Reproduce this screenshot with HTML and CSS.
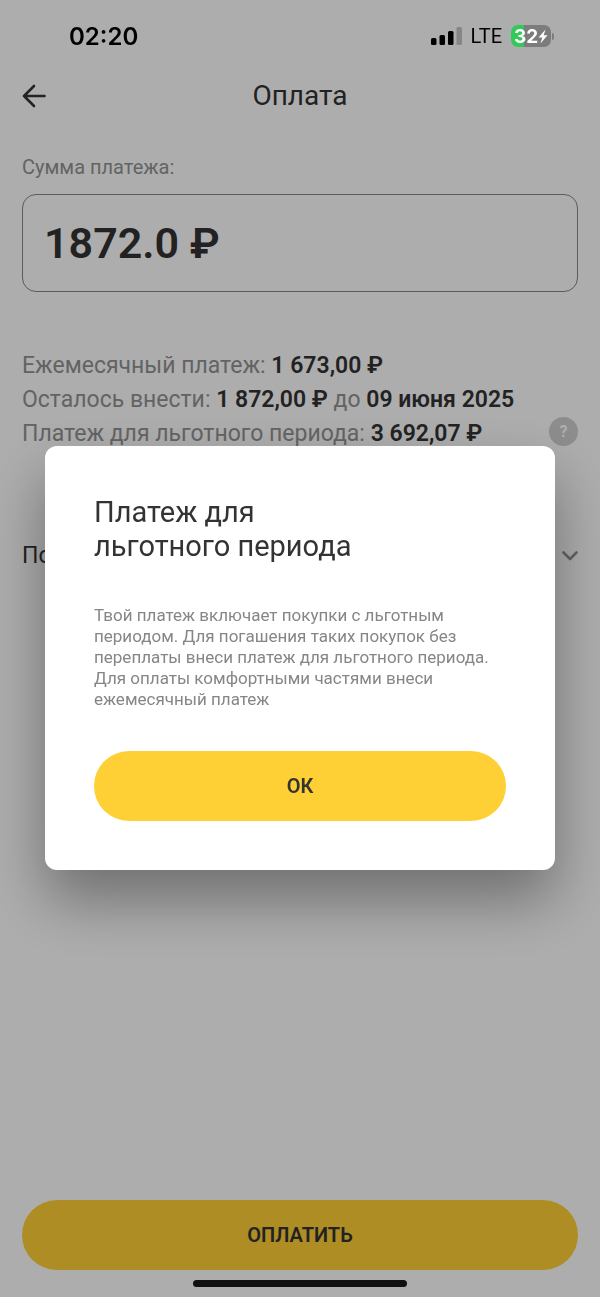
FILE: index.html
```html
<!DOCTYPE html>
<html lang="ru">
<head>
<meta charset="utf-8">
<meta name="viewport" content="width=device-width, initial-scale=1">
<title>Оплата</title>
<link rel="stylesheet" href="styles.css">
</head>
<body>
<div class="screen">
  <div class="status">
    <time class="status-time">02:20</time>
    <div class="status-icons">
      <svg class="signal" viewBox="0 0 31 20" width="31" height="20" aria-hidden="true">
        <rect x="0" y="12" width="5.500" height="7" rx="1.500"/>
        <rect x="8.500" y="9" width="5.500" height="10" rx="1.500"/>
        <rect x="17" y="5" width="5.500" height="14" rx="1.500"/>
        <rect class="signal-off" x="25.500" y="1" width="5.500" height="18" rx="1.500"/>
      </svg>
      <span class="network">LTE</span>
      <div class="battery">
        <div class="battery-body">
          <span>32</span>
          <svg viewBox="0 0 10 15" width="10" height="15" aria-hidden="true"><path d="M7.500 0.500L0.500 8.500H4.300L2.500 14.500L9.500 6.300H5.700Z"/></svg>
        </div>
        <div class="battery-tip"></div>
      </div>
    </div>
  </div>

  <header class="header">
    <button class="back" type="button" aria-label="Назад">
      <svg viewBox="0 0 24 24" width="24" height="24" aria-hidden="true"><path d="M22.500 12H2M12 2L2 12L12 22"/></svg>
    </button>
    <h1 class="title">Оплата</h1>
  </header>

  <main class="content">
    <label class="label" for="amount">Сумма платежа:</label>
    <input class="amount" id="amount" type="text" value="1872.0 ₽">
    <div class="summary">
      <p class="line">Ежемесячный платеж: <b>1 673,00 ₽</b></p>
      <p class="line">Осталось внести: <b>1 872,00 ₽</b> до <b>09 июня 2025</b></p>
      <div class="line-row">
        <p class="line">Платеж для льготного периода: <b>3 692,07 ₽</b></p>
        <button class="help" type="button" aria-label="Подсказка">?</button>
      </div>
    </div>
    <button class="expander" type="button">
      <span>По</span>
      <svg viewBox="0 0 16 10" width="16" height="10" aria-hidden="true"><path d="M1.500 1.500L8 8L14.500 1.500"/></svg>
    </button>
  </main>

  <footer class="footer">
    <button class="button" type="button">ОПЛАТИТЬ</button>
    <div class="home"></div>
  </footer>
</div>

<div class="overlay">
  <section class="dialog" role="dialog" aria-modal="true" aria-labelledby="dialog-title">
    <h2 class="dialog-title" id="dialog-title">Платеж для<br>льготного периода</h2>
    <p class="dialog-text">Твой платеж включает покупки с льготным<br>периодом. Для погашения таких покупок без<br>переплаты внеси платеж для льготного периода.<br>Для оплаты комфортными частями внеси<br>ежемесячный платеж</p>
    <button class="button" type="button">ОК</button>
  </section>
</div>
</body>
</html>
```

FILE: styles.css
```css
* {
  box-sizing: border-box;
}

body {
  margin: 0;
  background: #fff;
  color: #333;
  font-family: Roboto, "Noto Sans", sans-serif;
}

h1, h2, p {
  margin: 0;
  font-weight: 400;
}

button, input {
  font-family: inherit;
  color: inherit;
}

button {
  border: 0;
  padding: 0;
  background: none;
}

svg {
  flex: none;
}

.screen {
  display: flex;
  flex-direction: column;
  min-height: 100vh;
}

/* Status bar stays above the dimmed page */
.status {
  position: relative;
  z-index: 2;
  display: flex;
  align-items: center;
  justify-content: space-between;
  height: 72px;
  padding: 0 46px 0 69px;
  color: #000;
}

.status-time {
  font-family: Inter, sans-serif;
  font-size: 24px;
  font-weight: 600;
}

.status-icons {
  display: flex;
  align-items: center;
  gap: 9px;
}

.signal-off {
  fill: #868686;
}

.network {
  font-size: 20px;
}

.battery {
  display: flex;
  align-items: center;
  gap: 1px;
}

.battery-body {
  display: flex;
  align-items: center;
  justify-content: center;
  width: 40px;
  height: 22px;
  border-radius: 7px;
  background: linear-gradient(to right, #34c759 32%, #7c7c7c 32%);
  color: #fff;
  font-family: Inter, sans-serif;
  font-size: 19px;
  font-weight: 700;
}

.battery-body svg {
  fill: #fff;
}

.battery-tip {
  width: 2px;
  height: 7px;
  border-radius: 0 2px 2px 0;
  background: #7c7c7c;
}

.header {
  display: grid;
  grid-template-columns: 24px 1fr 24px;
  align-items: center;
  height: 47px;
  padding: 0 22px;
}

.back {
  display: flex;
}

.back svg, .expander svg {
  fill: none;
  stroke: #333;
  stroke-width: 2.6;
  stroke-linecap: round;
  stroke-linejoin: round;
}

.title {
  font-size: 28px;
  line-height: 34px;
  text-align: center;
}

.content {
  display: flex;
  flex: 1;
  flex-direction: column;
  padding: 36px 22px 0;
}

.label {
  color: #939393;
  font-size: 20px;
  line-height: 24px;
}

.amount {
  width: 100%;
  height: 98px;
  margin-top: 15px;
  padding: 0 21px;
  border: 1px solid #868686;
  border-radius: 14px;
  background: none;
  font-size: 43px;
  font-weight: 600;
}

.summary {
  margin-top: 57px;
  color: #939393;
}

.line {
  font-size: 23px;
  line-height: 34px;
  white-space: nowrap;
}

.line b {
  color: #333;
  font-weight: 600;
}

.line-row {
  display: flex;
  align-items: flex-start;
  justify-content: space-between;
}

.help {
  width: 29px;
  height: 29px;
  border-radius: 50%;
  background: #d0d0d0;
  color: #fff;
  font-size: 16px;
  font-weight: 700;
}

.expander {
  display: flex;
  align-items: center;
  justify-content: space-between;
  margin-top: 88px;
  font-size: 23px;
  line-height: 34px;
}

.expander svg {
  stroke: #939393;
}

.footer {
  display: flex;
  flex-direction: column;
  align-items: center;
  gap: 10px;
  padding: 0 22px 10px;
}

.button {
  width: 100%;
  height: 70px;
  border-radius: 35px;
  background: #ffd035;
  font-size: 20px;
  font-weight: 600;
}

.home {
  width: 214px;
  height: 7px;
  border-radius: 4px;
  background: #1a1a1a;
}

.overlay {
  position: fixed;
  inset: 0;
  z-index: 1;
  display: flex;
  align-items: center;
  justify-content: center;
  padding: 19px 45px 0;
  background: rgba(0, 0, 0, 0.32);
}

.dialog {
  width: 100%;
  padding: 49px;
  border-radius: 12px;
  background: #fff;
  box-shadow: 0 30px 60px rgba(0, 0, 0, 0.36);
}

.dialog-title {
  font-size: 29px;
  line-height: 34px;
}

.dialog-text {
  margin: 42px 0 41px;
  color: #868686;
  font-size: 17px;
  line-height: 21px;
}
```
